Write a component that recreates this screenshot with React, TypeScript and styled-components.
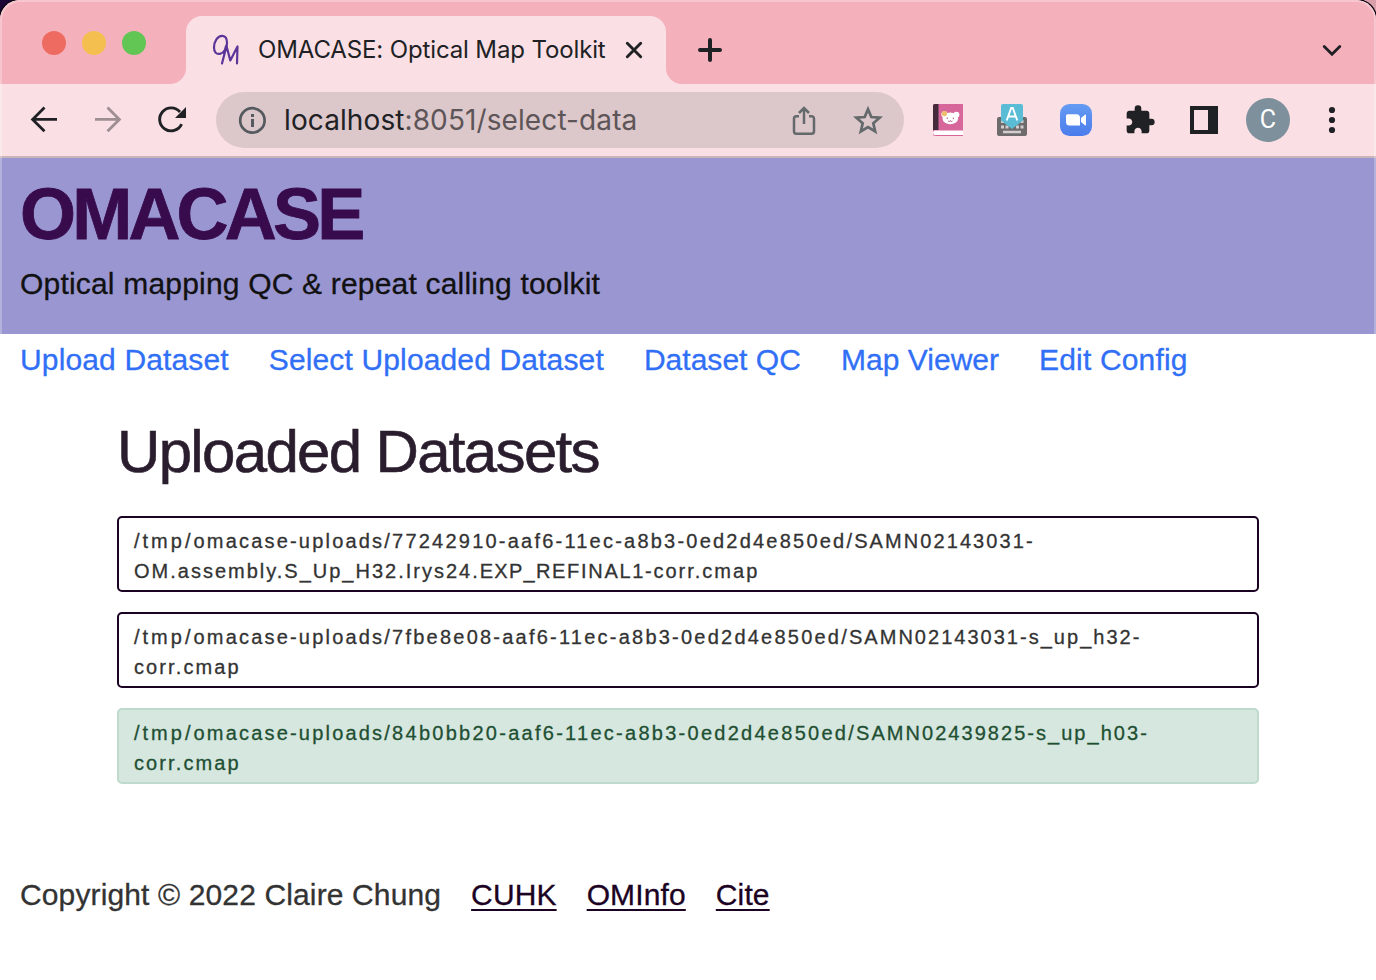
import React from "react";
import styled, { createGlobalStyle } from "styled-components";

const Global = createGlobalStyle`
  *, *::before, *::after { box-sizing: border-box; }
  html, body { margin: 0; padding: 0; }
  body { width: 1376px; height: 980px; overflow: hidden; background: #fff; }
  svg { display: block; flex: none; }
`;

const Desktop = styled.div`
  width: 1376px;
  height: 980px;
  background: linear-gradient(90deg, #1c0536 0, #1c0536 50%, #d9a0ac 50%);
`;

const Window = styled.div`
  position: relative;
  height: 100%;
  display: flex;
  flex-direction: column;
  overflow: hidden;
  border-radius: 20px 20px 0 0;
  background: #fff;
  box-shadow: 0 0 0 1.5px #0c0310;
  &::after {
    content: "";
    position: absolute;
    inset: 0;
    border: 2px solid rgba(255, 255, 255, 0.26);
    border-bottom: 0;
    border-radius: 20px 20px 0 0;
    pointer-events: none;
  }
`;

const TabStrip = styled.div`
  display: flex;
  height: 84px;
  background: #f4b1bc;
`;

const Lights = styled.div`
  display: flex;
  gap: 16px;
  width: 186px;
  padding: 31px 0 0 42px;
`;

const Light = styled.span<{ $color: string }>`
  width: 24px;
  height: 24px;
  border-radius: 50%;
  background: ${(p) => p.$color};
`;

const Tab = styled.div`
  position: relative;
  display: flex;
  align-items: center;
  width: 480px;
  height: 68px;
  margin-top: 16px;
  padding-left: 26px;
  background: #fae0e5;
  border-radius: 16px 16px 0 0;
  &::before, &::after {
    content: "";
    position: absolute;
    bottom: 0;
    width: 16px;
    height: 16px;
  }
  &::before { left: -16px; background: radial-gradient(circle at 0 0, transparent 15.5px, #fae0e5 16.5px); }
  &::after { right: -16px; background: radial-gradient(circle at 100% 0, transparent 15.5px, #fae0e5 16.5px); }
`;

const TabTitle = styled.span`
  width: 349px;
  margin: 0 18px 0 18px;
  font: 400 24px/32px Inter, sans-serif;
  letter-spacing: -0.13px;
  color: #202124;
  white-space: nowrap;
`;

const StripActions = styled.div`
  flex: 1;
  display: flex;
  justify-content: space-between;
  padding: 38px 34px 0 32px;
`;

const Toolbar = styled.div`
  display: flex;
  align-items: center;
  height: 74px;
  padding: 0 34px 0 30px;
  background: #fae0e5;
  border-bottom: 2px solid #c9b4b9;
`;

const NavIcons = styled.div`
  display: flex;
  gap: 36px;
  width: 186px;
`;

const AddressBar = styled.div`
  display: flex;
  align-items: center;
  width: 688px;
  height: 56px;
  padding: 0 20px 0 22px;
  border-radius: 28px;
  background: #dcc7cb;
`;

const Url = styled.span`
  flex: 1;
  margin-left: 17px;
  font: 400 28px/40px Inter, sans-serif;
  letter-spacing: 0.1px;
  color: #5d5557;
  white-space: nowrap;
`;

const Host = styled.span`
  color: #202124;
`;

const AddressActions = styled.div`
  display: flex;
  gap: 32px;
`;

const Extensions = styled.div`
  display: flex;
  align-items: center;
  gap: 32px;
  margin-left: 28px;
`;

const Avatar = styled.div`
  display: flex;
  align-items: center;
  justify-content: center;
  width: 44px;
  height: 44px;
  margin: 0 0 0 -6px;
  border-radius: 50%;
  background: #7d909b;
  color: #fff;
  font: 400 25px/44px Roboto, sans-serif;
`;

const Page = styled.div`
  flex: 1;
  font-family: "Liberation Sans", Arial, sans-serif;
  font-size: 30px;
  color: #333;
  -webkit-text-stroke: 0.3px currentColor;
`;

const Banner = styled.header`
  height: 176px;
  padding: 20px 20px 0;
  background: #9a96d2;
`;

const Brand = styled.h1`
  margin: 0;
  font-size: 72px;
  font-weight: 700;
  line-height: 72px;
  letter-spacing: -3.8px;
  color: #370b4c;
  white-space: nowrap;
  -webkit-text-stroke: 0.8px currentColor;
`;

const Tagline = styled.p`
  margin: 10px 0 0;
  line-height: 48px;
  letter-spacing: 0.19px;
  color: #111;
`;

const SiteNav = styled.nav`
  display: flex;
  gap: 40px;
  padding: 2px 20px 0;
  line-height: 48px;
`;

const NavLink = styled.a<{ $track: number }>`
  color: #306ff6;
  text-decoration: none;
  white-space: nowrap;
  letter-spacing: ${(p) => p.$track}px;
`;

const Content = styled.main`
  margin: 29px 117px 0;
`;

const Heading = styled.h2`
  margin: 0 0 29px;
  height: 74px;
  font-size: 60px;
  font-weight: 400;
  line-height: 78px;
  letter-spacing: -1.67px;
  color: #2a1e2e;
  -webkit-text-stroke: 0.6px currentColor;
`;

const DatasetList = styled.div`
  display: flex;
  flex-direction: column;
  gap: 20px;
`;

const Dataset = styled.div<{ $selected?: boolean }>`
  height: 76px;
  padding: 8px 15px 0;
  border: 2px solid ${(p) => (p.$selected ? "#bfdacd" : "#1c0222")};
  border-radius: 5px;
  background: ${(p) => (p.$selected ? "#d5e7de" : "#fff")};
  color: ${(p) => (p.$selected ? "#1f4f33" : "#333")};
  font-size: 20px;
  line-height: 30px;
  letter-spacing: 2px;
  white-space: pre;
`;

const Segment = styled.span<{ $track: number }>`
  letter-spacing: ${(p) => p.$track}px;
`;

const Footer = styled.footer`
  display: flex;
  gap: 30px;
  margin-top: 87px;
  padding: 0 20px;
  line-height: 48px;
  letter-spacing: 0.13px;
`;

const FooterLink = styled.a`
  color: #1c0222;
  text-decoration: underline;
  text-decoration-thickness: 2px;
  text-underline-offset: 4px;
`;

const OmIcon = () => (
  <svg width="28" height="32" viewBox="0 0 28 32" fill="none" stroke="#5c3599" strokeWidth="2.2" strokeLinecap="round" strokeLinejoin="round">
    <path d="M10.500 1.800C5.500 1.500 2 8 2 13.500c0 5 2.500 7 6 6.300 4.500-1 7-6 7-11 0-4-1.500-6.800-4.500-7z" />
    <path d="M10 29.500L14.500 12l3.800 14.500L25.500 12.500 25 29.500M12 20l2-8" />
  </svg>
);

const CloseIcon = () => (
  <svg width="18" height="18" viewBox="0 0 18 18" stroke="#202124" strokeWidth="2.9" strokeLinecap="round">
    <path d="M2.3 2.3l13.4 13.4M15.7 2.3L2.3 15.7" />
  </svg>
);

const PlusIcon = () => (
  <svg width="24" height="24" viewBox="0 0 24 24" stroke="#202124" strokeWidth="4" strokeLinecap="round">
    <path d="M2 12h20M12 2v20" />
  </svg>
);

const ChevronIcon = () => (
  <svg width="20" height="24" viewBox="0 0 20 24" fill="none" stroke="#202124" strokeWidth="2.8" strokeLinecap="round">
    <path d="M2.2 8.4l7.8 7.8 7.8-7.8" />
  </svg>
);

const BackIcon = () => (
  <svg width="28" height="28" viewBox="0 0 28 28" fill="none" stroke="#202124" strokeWidth="2.8">
    <path d="M27 13.4H3M14.5 1.5L2.6 13.4l11.9 11.9" />
  </svg>
);

const ForwardIcon = () => (
  <svg width="28" height="28" viewBox="0 0 28 28" fill="none" stroke="#9e8f93" strokeWidth="2.8">
    <path d="M1 13.4h24M13.5 1.5l11.9 11.9-11.9 11.9" />
  </svg>
);

const ReloadIcon = () => (
  <svg width="28" height="28" viewBox="0 0 28 28" fill="none">
    <path d="M23.6 18.2A11.5 11.5 0 1 1 22 6" stroke="#202124" strokeWidth="2.9" />
    <path d="M28 1v11H17z" fill="#202124" />
  </svg>
);

const InfoIcon = () => (
  <svg width="29" height="28" viewBox="0 0 29 28" fill="none">
    <circle cx="14.4" cy="14.4" r="12.2" stroke="#555a5e" strokeWidth="2.7" />
    <path d="M13 13h3v8h-3zM13 8h3v3h-3z" fill="#555a5e" />
  </svg>
);

const ShareIcon = () => (
  <svg width="32" height="32" viewBox="0 0 32 32" fill="none" stroke="#64696b" strokeWidth="2.5">
    <path d="M11 12.200H8.500a2.500 2.500 0 0 0-2.500 2.500v12.700a2.500 2.500 0 0 0 2.500 2.400h15a2.500 2.500 0 0 0 2.500-2.400V14.700a2.500 2.500 0 0 0-2.500-2.500H21" />
    <path d="M16 20V5M11 9l5-5 5 5" />
  </svg>
);

const StarIcon = () => (
  <svg width="32" height="32" viewBox="0 0 32 32" fill="none" stroke="#64696b" strokeWidth="2.7">
    <path d="M16 5.2l3.3 7.8 8.4.7-6.4 5.5 1.9 8.3-7.2-4.4-7.2 4.4 1.9-8.3-6.4-5.5 8.4-.7z" />
  </svg>
);

const BookIcon = () => (
  <svg width="32" height="32" viewBox="0 0 32 32">
    <path d="M2 0h29v32H3a2 2 0 0 1-2-2V2a2 2 0 0 1 1-2z" fill="#d7669a" />
    <path d="M3 0h3.5v26H1V2a2 2 0 0 1 2-2z" fill="#452a3c" />
    <path d="M3 26.4h28v4.7H4a2.3 2.3 0 0 1-1-4.7z" fill="#fff" />
    <circle cx="12.500" cy="10.4" r="3.1" fill="#fff" />
    <circle cx="24.4" cy="10.8" r="3" fill="#fff" />
    <ellipse cx="18.3" cy="14.4" rx="7.8" ry="5.8" fill="#fff" />
    <circle cx="12.4" cy="9.6" r="2.7" fill="#eebf6d" />
    <path d="M15.2 13.6v1.5M21.3 13.6v1.5M16.3 17q1 1 2-.2 1 1.200 2 .2" fill="none" stroke="#a84f78" />
  </svg>
);

const KeyboardIcon = () => (
  <svg width="32" height="32" viewBox="0 0 32 32">
    <rect x="1" y="13" width="30" height="19" rx="2" fill="#6e6b6c" />
    <path d="M5 16h3v3H5zM24.500 16h3v3h-3zM5 21.500h3v3H5zM9.500 21.500h3v3h-3zM20 21.500h3v3h-3zM24.500 21.500h3v3h-3zM7 26.700h18v2.600H7z" fill="#d3cdd0" />
    <path d="M7 0h18a2 2 0 0 1 2 2v14.500L16 25 5 16.500V2a2 2 0 0 1 2-2z" fill="#5bbcd6" />
    <path d="M10.700 16.500L15.200 4h1.600l4.500 12.500M12.300 12.500h7.400" fill="none" stroke="#fff" strokeWidth="1.9" />
  </svg>
);

const VideoIcon = () => (
  <svg width="32" height="32" viewBox="0 0 32 32">
    <defs>
      <linearGradient id="video" x1="0" y1="0" x2="0" y2="1">
        <stop offset="0" stopColor="#659bf3" />
        <stop offset="1" stopColor="#4b7cec" />
      </linearGradient>
    </defs>
    <rect width="32" height="32" rx="9.500" fill="url(#video)" />
    <path d="M7.500 10.200h9a3.500 3.500 0 0 1 3.500 3.500v7.800H9.500A3.500 3.500 0 0 1 6 18v-6.300a1.500 1.500 0 0 1 1.500-1.500zM21 14l4-3.200q1-.6 1 .6v9.200q0 1.200-1 .6L21 18z" fill="#fff" />
  </svg>
);

const PuzzleIcon = () => (
  <svg width="32" height="32" viewBox="0 0 24 24">
    <path d="M20.500 11H19V7c0-1.100-.9-2-2-2h-4V3.500a2.500 2.500 0 0 0-5 0V5H4c-1.100 0-1.990.9-1.990 2v3.800H3.500c1.490 0 2.700 1.210 2.700 2.700s-1.210 2.700-2.700 2.700H2V20c0 1.100.9 2 2 2h3.800v-1.500c0-1.490 1.210-2.700 2.700-2.700 1.490 0 2.700 1.210 2.700 2.700V22H17c1.100 0 2-.9 2-2v-4h1.500a2.500 2.500 0 0 0 0-5z" fill="#202124" />
  </svg>
);

const PanelIcon = () => (
  <svg width="32" height="32" viewBox="0 0 32 32">
    <path fillRule="evenodd" d="M2 2h28v28H2zM6 6v20h14V6z" fill="#202124" />
  </svg>
);

const MenuIcon = () => (
  <svg width="20" height="28" viewBox="0 0 20 28" fill="#202124">
    <circle cx="10" cy="4" r="3.100" />
    <circle cx="10" cy="14" r="3.100" />
    <circle cx="10" cy="24" r="3.100" />
  </svg>
);

type Part = [text: string, track: number];

const root: Part[] = [["/tmp/", 3], ["omacase-uploads/", 2.2]];

const datasets: { id: string; parts: Part[]; selected?: boolean }[] = [
  {
    id: "77242910",
    parts: [
      ["77242910-aaf6-11ec-a8b3-0ed2d4e850ed/", 2.22],
      ["SAMN02143031-\n", 2.08],
      ["OM.assembly.S_Up_H32.Irys24.", 2],
      ["EXP_", 1.25],
      ["REFINAL1-", 1.7],
      ["corr.cmap", 2],
    ],
  },
  {
    id: "7fbe8e08",
    parts: [
      ["7fbe8e08-aaf6-11ec-a8b3-0ed2d4e850ed/", 2.23],
      ["SAMN02143031-s_up_h32-\n", 2.02],
      ["corr.cmap", 2.1],
    ],
  },
  {
    id: "84b0bb20",
    selected: true,
    parts: [
      ["84b0bb20-aaf6-11ec-a8b3-0ed2d4e850ed/", 2.27],
      ["SAMN02439825-s_up_h03-\n", 2.04],
      ["corr.cmap", 2.1],
    ],
  },
];

const links: Part[] = [
  ["Upload Dataset", 0.14],
  ["Select Uploaded Dataset", 0.14],
  ["Dataset QC", 0.03],
  ["Map Viewer", 0.03],
  ["Edit Config", 0.16],
];

export default function App() {
  return (
    <Desktop>
      <Global />
      <Window>
        <TabStrip>
          <Lights>
            <Light $color="#ed6b60" />
            <Light $color="#f5bf4f" />
            <Light $color="#62c655" />
          </Lights>
          <Tab>
            <OmIcon />
            <TabTitle>OMACASE: Optical Map Toolkit</TabTitle>
            <CloseIcon />
          </Tab>
          <StripActions>
            <PlusIcon />
            <ChevronIcon />
          </StripActions>
        </TabStrip>
        <Toolbar>
          <NavIcons>
            <BackIcon />
            <ForwardIcon />
            <ReloadIcon />
          </NavIcons>
          <AddressBar>
            <InfoIcon />
            <Url>
              <Host>localhost</Host>:8051/select-data
            </Url>
            <AddressActions>
              <ShareIcon />
              <StarIcon />
            </AddressActions>
          </AddressBar>
          <Extensions>
            <BookIcon />
            <KeyboardIcon />
            <VideoIcon />
            <PuzzleIcon />
            <PanelIcon />
            <Avatar>C</Avatar>
            <MenuIcon />
          </Extensions>
        </Toolbar>
        <Page>
          <Banner>
            <Brand>OMACASE</Brand>
            <Tagline>Optical mapping QC &amp; repeat calling toolkit</Tagline>
          </Banner>
          <SiteNav>
            {links.map(([label, track]) => (
              <NavLink key={label} $track={track}>{label}</NavLink>
            ))}
          </SiteNav>
          <Content>
            <Heading>Uploaded Datasets</Heading>
            <DatasetList>
              {datasets.map((d) => (
                <Dataset key={d.id} $selected={d.selected}>
                  {[...root, ...d.parts].map(([text, track]) => (
                    <Segment key={text} $track={track}>{text}</Segment>
                  ))}
                </Dataset>
              ))}
            </DatasetList>
          </Content>
          <Footer>
            <span>Copyright © 2022 Claire Chung</span>
            <FooterLink>CUHK</FooterLink>
            <FooterLink>OMInfo</FooterLink>
            <FooterLink>Cite</FooterLink>
          </Footer>
        </Page>
      </Window>
    </Desktop>
  );
}
